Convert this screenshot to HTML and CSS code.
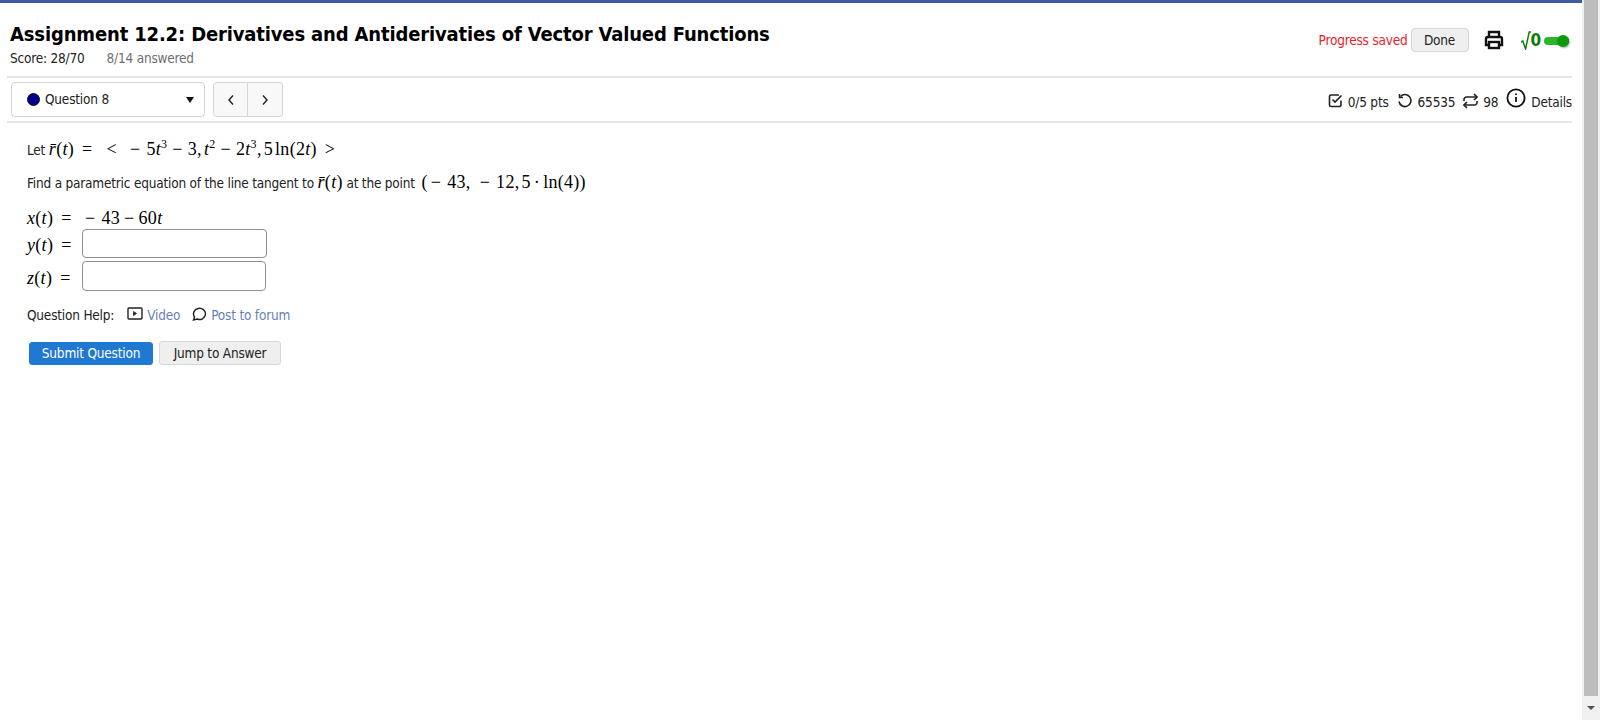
FILE: index.html
```html
<!DOCTYPE html>
<html lang="en">
<head>
    <meta charset="UTF-8">
    <title>Assignment 12.2</title>
    <link rel="stylesheet" href="styles.css">
</head>
<body>
    <div class="page">
        <div class="topbar"></div>
        <div class="header">
            <div class="header-text">
                <h1>Assignment 12.2: Derivatives and Antiderivaties of Vector Valued Functions</h1>
                <div class="score"><span>Score: 28/70</span><span class="answered">8/14 answered</span></div>
            </div>
            <div class="header-tools">
                <span class="saved">Progress saved</span>
                <button class="btn-done">Done</button>
                <svg class="icon-print" width="20" height="20" viewBox="0 0 20 20" fill="none" stroke="#111" stroke-width="2.4">
                    <path d="M5 7V2h10v5"/>
                    <path d="M5 15H2V9a2 2 0 0 1 2-2h12a2 2 0 0 1 2 2v6h-3"/>
                    <rect x="5" y="12" width="10" height="6"/>
                </svg>
                <span class="sqrt"><svg width="10" height="19" viewBox="0 0 11 19" preserveAspectRatio="none" fill="none" stroke="#0a7d0a" stroke-width="1.6"><path d="M0 11l2-1 3 8L9 1h2"/></svg><span class="sqrt-zero">0</span></span>
                <span class="toggle"><span class="knob"></span></span>
            </div>
        </div>
        <div class="navrow">
            <div class="question-select">
                <span class="dot"></span>
                <span class="qname">Question 8</span>
                <span class="caret"></span>
            </div>
            <div class="pager">
                <button class="pager-btn"><svg width="8" height="12" viewBox="0 0 8 12" fill="none" stroke="#222" stroke-width="1.4"><path d="M6 1.5L2 6l4 4.500"/></svg></button>
                <button class="pager-btn"><svg width="8" height="12" viewBox="0 0 8 12" fill="none" stroke="#222" stroke-width="1.4"><path d="M2 1.5L6 6l-4 4.500"/></svg></button>
            </div>
            <div class="stats">
                <svg width="15" height="15" viewBox="0 0 15 15" fill="none" stroke="#222" stroke-width="1.6"><path d="M13 7.500V12a1.500 1.500 0 0 1-1.500 1.500H3A1.500 1.500 0 0 1 1.500 12V3.500A1.500 1.500 0 0 1 3 2h8"/><path d="M4.500 6.500l2.500 2.500 6.500-6.500"/></svg>
                <span class="stat">0/5 pts</span>
                <svg class="stat-icon" width="16" height="16" viewBox="0 0 16 16" fill="none" stroke="#222" stroke-width="1.600"><path d="M3.500 3.500a6 6 0 1 1-1.500 5"/><path d="M2.500 1v3.500H6"/></svg>
                <span class="stat">65535</span>
                <svg class="stat-icon" width="15" height="16" viewBox="0 0 15 16" fill="none" stroke="#222" stroke-width="1.600"><path d="M11 1l3 3-3 3"/><path d="M1 8V6.500A2.500 2.500 0 0 1 3.500 4H14"/><path d="M4 15l-3-3 3-3"/><path d="M14 8v1.500A2.500 2.500 0 0 1 11.500 12H1"/></svg>
                <span class="stat">98</span>
                <svg class="stat-info" width="20" height="20" viewBox="0 0 20 20" fill="none" stroke="#111" stroke-width="1.800"><circle cx="10" cy="10" r="8.600"/><path d="M10 9v5"/><path d="M10 5.500v1.600"/></svg>
                <span class="stat details">Details</span>
            </div>
        </div>
        <div class="question">
            <p class="line-let">Let <span class="math"><i>r&#772;</i>(<i>t</i>)<span class="rel">=</span><span class="rel">&lt;</span><span class="neg lead">&minus;</span>5<i>t</i><sup>3</sup><span class="bin">&minus;</span>3,<span class="sep"></span><i>t</i><sup>2</sup><span class="bin">&minus;</span>2<i>t</i><sup>3</sup>,<span class="sep"></span>5<span class="sep"></span>ln(2<i>t</i>)<span class="rel">&gt;</span></span></p>
            <p class="line-find">Find a parametric equation of the line tangent to <span class="math"><i>r&#772;</i>(<i>t</i>)</span> at the point <span class="math point">(<span class="neg">&minus;</span>43,<span class="neg wide">&minus;</span>12,<span class="sep"></span>5<span class="dot-op">&middot;</span>ln(4))</span></p>
            <div class="answers">
                <div class="answer-row row-given"><span class="math answer-label"><i>x</i>(<i>t</i>)<span class="rel">=</span></span><span class="math"><span class="neg">&minus;</span>43<span class="bin tight">&minus;</span>60<i>t</i></span></div>
                <div class="answer-row"><span class="math answer-label"><i>y</i>(<i>t</i>)<span class="rel">=</span></span><input class="answer-box" type="text"></div>
                <div class="answer-row"><span class="math answer-label"><i>z</i>(<i>t</i>)<span class="rel">=</span></span><input class="answer-box short" type="text"></div>
            </div>
            <div class="help">
                <span>Question Help:</span>
                <a class="help-link video"><svg width="16" height="13" viewBox="0 0 16 13" fill="none" stroke="#222" stroke-width="1.400"><rect x="1" y="1" width="14" height="11" rx="1"/><path d="M6.500 4.500v4l3-2z" fill="#222" stroke-width="0.800"/></svg>Video</a>
                <a class="help-link"><svg width="15" height="15" viewBox="0 0 15 15" fill="none" stroke="#222" stroke-width="1.400"><path d="M2.500 11A6 5.600 0 1 1 5 13l-3.500 1z"/></svg>Post to forum</a>
            </div>
            <div class="actions">
                <button class="btn-submit">Submit Question</button>
                <button class="btn-jump">Jump to Answer</button>
            </div>
        </div>
    </div>
    <div class="scrollbar">
        <div class="thumb"></div>
        <div class="arrow"></div>
    </div>
</body>
</html>
```

FILE: styles.css
```css
html, body {
    margin: 0;
    height: 100%;
}
body {
    display: flex;
    overflow: hidden;
    font-family: 'DejaVu Sans Condensed', 'DejaVu Sans', sans-serif;
    font-stretch: condensed;
    font-size: 13.5px;
    letter-spacing: -0.2px;
    color: #222;
    background: #fff;
}
button {
    font-family: inherit;
    font-stretch: inherit;
    font-size: 13.5px;
    letter-spacing: -0.2px;
    color: #222;
    cursor: pointer;
}
.page {
    flex: 1;
    min-width: 0;
}
.topbar {
    height: 3px;
    background: #3e5c9f;
}
.header {
    display: flex;
    justify-content: space-between;
    align-items: flex-start;
    height: 73px;
    margin: 0 10px 0 7px;
    padding: 0 0 0 3px;
    border-bottom: 2px solid #e6e6e6;
    box-sizing: content-box;
}
h1 {
    margin: 18px 0 0;
    font-size: 20px;
    line-height: 27px;
    font-weight: 700;
    letter-spacing: -0.15px;
    color: #000;
}
.score {
    display: flex;
    gap: 22px;
    line-height: 18px;
    margin-top: 1px;
}
.answered {
    color: #6f6f6f;
}
.header-tools {
    display: flex;
    align-items: center;
    margin-top: 25px;
    margin-right: 3px;
}
.saved {
    color: #e8222c;
    margin-right: 3px;
}
.btn-done {
    width: 58px;
    height: 24px;
    padding: 0;
    background: #efefef;
    border: 1px solid #d8d8d8;
    border-radius: 4px;
    margin-right: 15px;
}
.sqrt {
    display: flex;
    align-items: center;
    margin-left: 17px;
    color: #0a7d0a;
}
.sqrt-zero {
    font-size: 17px;
    font-weight: 700;
}
.toggle {
    position: relative;
    width: 25px;
    height: 8px;
    margin-left: 3px;
    margin-top: 2px;
    background: #2cb52c;
    border-radius: 4px;
}
.knob {
    position: absolute;
    right: 0;
    top: -2px;
    width: 12px;
    height: 12px;
    background: #0b9a0b;
    border-radius: 50%;
    box-shadow: 1px 1px 2px rgba(0, 0, 0, 0.35);
}
.navrow {
    display: flex;
    align-items: center;
    height: 43px;
    margin: 0 10px 0 7px;
    padding-left: 4px;
    border-bottom: 2px solid #e6e6e6;
}
.question-select {
    display: flex;
    align-items: center;
    box-sizing: border-box;
    width: 194px;
    height: 35px;
    padding: 0 10px 0 15px;
    border: 1px solid #d5d5d5;
    border-radius: 4px;
}
.dot {
    width: 13px;
    height: 13px;
    margin-right: 5px;
    background: #00008b;
    border: 1px solid #111;
    box-sizing: border-box;
    border-radius: 50%;
}
.qname {
    flex: 1;
    margin-top: -2px;
}
.caret {
    border-left: 4px solid transparent;
    border-right: 4px solid transparent;
    border-top: 6px solid #111;
}
.pager {
    display: flex;
    margin-left: 8px;
}
.pager-btn {
    display: flex;
    align-items: center;
    justify-content: center;
    width: 35px;
    height: 35px;
    padding: 0;
    background: #f8f8f8;
    border: 1px solid #d5d5d5;
}
.pager-btn:first-child {
    border-radius: 4px 0 0 4px;
}
.pager-btn:last-child {
    border-left: 0;
    border-radius: 0 4px 4px 0;
}
.stats {
    display: flex;
    align-items: center;
    margin-left: auto;
}
.stats svg {
    margin-top: 2px;
}
.stat {
    margin-left: 5px;
    margin-top: 5px;
}
.stat-icon {
    margin-left: 8px;
}
.stats .stat-info {
    margin-left: 8px;
    margin-top: 0;
    margin-bottom: 4px;
}
.question {
    padding: 0 0 0 27px;
}
.math {
    font-family: 'Liberation Serif', serif;
    font-stretch: normal;
    font-size: 18px;
    line-height: 1;
    letter-spacing: 0.3px;
    color: #000;
}
.math sup {
    font-size: 12px;
    line-height: 0;
}
.rel {
    margin: 0 6px 0 8px;
}
.bin {
    margin: 0 5px;
}
.bin.tight {
    margin: 0 4px;
}
.dot-op {
    margin: 0 3px;
}
.sep {
    margin-right: 2px;
}
.neg {
    margin: 0 6px 0 3px;
}
.neg.lead {
    margin-left: 7px;
}
.neg.wide {
    margin-left: 9px;
}
.point {
    margin-left: 3px;
}
.line-let {
    margin: 15px 0 0;
    line-height: 24px;
}
.line-find {
    margin: 9px 0 0;
    line-height: 24px;
}
.answers {
    margin-top: 12px;
}
.answer-row {
    display: flex;
    align-items: center;
}
.row-given {
    height: 22px;
}
.answer-label {
    width: 55px;
    flex: none;
}
.answer-box {
    box-sizing: border-box;
    width: 185px;
    height: 29px;
    margin-bottom: 3px;
    background: #fff;
    border: 1px solid #8f8f8f;
    border-radius: 4px;
}
.answer-box.short {
    width: 184px;
    height: 30px;
}
.help {
    display: flex;
    align-items: center;
    margin-top: 12px;
    line-height: 18px;
}
.help-link {
    display: flex;
    align-items: center;
    gap: 4px;
    margin-left: 12px;
    color: #6a7fb5;
}
.help-link svg {
    margin-top: -3px;
}
.help-link.video {
    margin-left: 13px;
}
.actions {
    display: flex;
    align-items: center;
    gap: 6px;
    margin: 17px 0 0 2px;
}
.btn-submit {
    width: 124px;
    height: 23px;
    padding: 0;
    color: #fff;
    background: #1f78d1;
    border: 1px solid #1f78d1;
    border-radius: 3px;
}
.btn-jump {
    width: 122px;
    height: 24px;
    padding: 0;
    background: #efefef;
    border: 1px solid #d8d8d8;
    border-radius: 3px;
}
.scrollbar {
    display: flex;
    flex-direction: column;
    flex: none;
    width: 18px;
    background: #f0f0f0;
}
.thumb {
    height: 696px;
    margin: 0 2px;
    background: #bdbdbd;
}
.arrow {
    width: 0;
    margin: 10px auto 0;
    border-left: 4px solid transparent;
    border-right: 4px solid transparent;
    border-top: 4px solid #505050;
}
```
